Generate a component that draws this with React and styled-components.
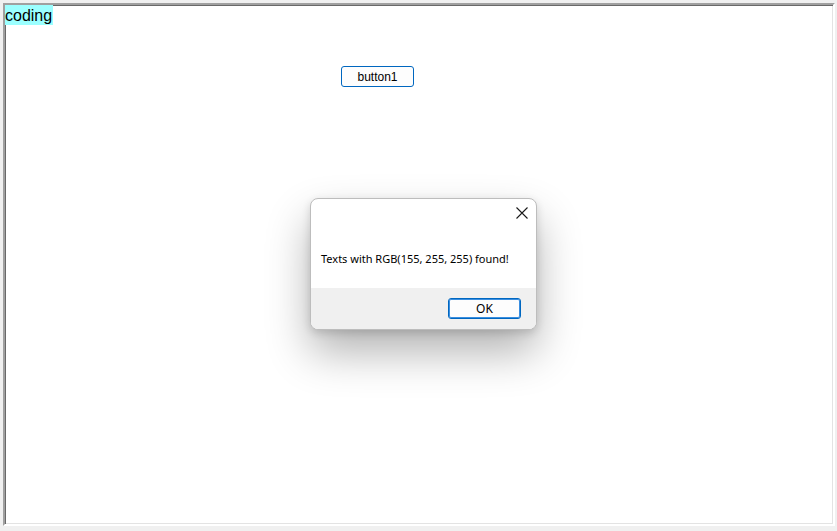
import React from "react";
import styled, { createGlobalStyle } from "styled-components";

const Global = createGlobalStyle`
  html, body { margin: 0; padding: 0; background: #f0f0f0; }
  body { width: 837px; height: 531px; overflow: hidden; }
  #root { height: 531px; }
`;

const Window = styled.div`
  position: relative;
  box-sizing: border-box;
  height: 531px;
  padding: 3px 2px 5px 3px;
`;

const Canvas = styled.div`
  box-sizing: border-box;
  height: 523px;
  background: #ffffff;
  border-style: solid;
  border-width: 2px;
  border-color: #a0a0a0 #ffffff #ffffff #a0a0a0;
  box-shadow: inset 1px 1px 0 #696969, inset -1px -1px 0 #e3e3e3;
  display: flex;
  flex-direction: column;
  align-items: flex-start;
`;

const Highlight = styled.span`
  background: rgb(155, 255, 255);
  color: #000;
  font-family: "Liberation Sans", Arial, sans-serif;
  font-size: 16px;
  line-height: 18px;
  padding: 2px 1px 0 0;
`;

const Button = styled.button`
  box-sizing: border-box;
  width: ${(p) => p.$w}px;
  height: ${(p) => p.$h}px;
  margin: 0;
  padding: 0;
  background: #fdfdfd;
  border: 1px solid #0067c0;
  border-radius: 3px;
  color: #000;
  font-family: ${(p) => p.$font};
  font-size: ${(p) => p.$size}px;
  box-shadow: inset 0 0 0 1px ${(p) => (p.$double ? "#3a8ee0" : "transparent")};
`;

const ButtonRow = styled.div`
  align-self: stretch;
  display: flex;
  padding: 41px 0 0 336px;
`;

const Dialog = styled.div`
  position: absolute;
  left: 310px;
  top: 198px;
  width: 227px;
  height: 132px;
  box-sizing: border-box;
  border: 1px solid #bdbdbd;
  border-radius: 8px;
  background: #fff;
  overflow: hidden;
  display: flex;
  flex-direction: column;
  box-shadow: 0 22px 44px rgba(0, 0, 0, 0.3), 0 3px 8px rgba(0, 0, 0, 0.14);
`;

const DialogBody = styled.div`
  flex: 1;
  display: flex;
  flex-direction: column;
`;

const CloseRow = styled.div`
  display: flex;
  justify-content: flex-end;
  padding: 8px 8px 0 0;
`;

const Message = styled.div`
  padding: 32px 0 0 10px;
  font-family: "Noto Sans", "Open Sans", sans-serif;
  font-size: 11px;
  color: #000;
  line-height: 16px;
`;

const Footer = styled.div`
  box-sizing: border-box;
  height: 41px;
  flex: none;
  background: #f0f0f0;
  display: flex;
  align-items: center;
  justify-content: flex-end;
  padding: 0 15px 0 0;
`;

const CloseIcon = () => (
  <svg width="12" height="12" viewBox="0 0 12 12">
    <path d="M0.5 0.5 L11.5 11.5 M11.5 0.5 L0.5 11.5" stroke="#1a1a1a" strokeWidth="1.1" fill="none" />
  </svg>
);

export default function App() {
  return (
    <>
      <Global />
      <Window>
        <Canvas>
          <Highlight>coding</Highlight>
          <ButtonRow>
            <Button $w={73} $h={21} $size={12} $font={'"Liberation Sans", Arial, sans-serif'}>
              button1
            </Button>
          </ButtonRow>
        </Canvas>
        <Dialog>
          <DialogBody>
            <CloseRow>
              <CloseIcon />
            </CloseRow>
            <Message>Texts with RGB(155, 255, 255) found!</Message>
          </DialogBody>
          <Footer>
            <Button $w={73} $h={21} $size={12} $double $font={'"Noto Sans", "Open Sans", sans-serif'}>
              OK
            </Button>
          </Footer>
        </Dialog>
      </Window>
    </>
  );
}
